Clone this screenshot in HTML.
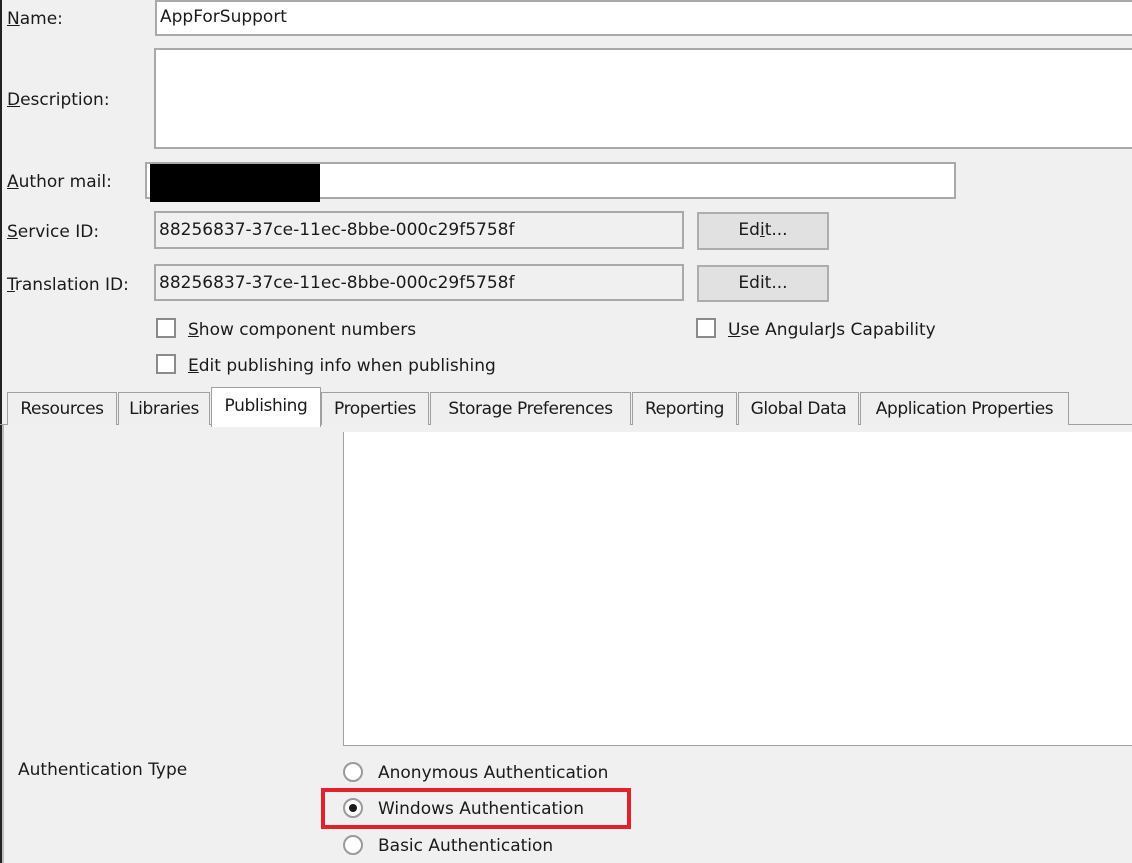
<!DOCTYPE html>
<html><head><style>
body{margin:0;width:1132px;height:863px;background:#f0f0f0;position:relative;overflow:hidden;font-family:"DejaVu Sans","Liberation Sans",sans-serif;font-size:17px;color:#1a1a1a}
.a{position:absolute}
.in{position:absolute;background:#fff;border:2px solid #a9a9a9;box-sizing:border-box}
.ro{background:#f0f0f0}
.lbl{position:absolute;left:7px;white-space:nowrap}
.btn{position:absolute;background:#e1e1e1;border:2px solid #adadad;box-sizing:border-box;text-align:center;line-height:33px}
.cb{position:absolute;width:20px;height:20px;background:#fff;border:2px solid #8a8a8a;box-sizing:border-box}
.tab{position:absolute;top:392px;height:33px;border:1px solid #a0a0a0;border-bottom:none;box-sizing:border-box;background:#efefef;line-height:33px;text-align:center;font-size:17px;letter-spacing:-0.4px}
.rd{position:absolute;left:343px;width:20px;height:20px;border-radius:50%;border:2px solid #9a9a9a;background:#fff;box-sizing:border-box}
u{text-decoration:underline}
</style></head><body>
<div class="a" style="left:0;top:0;width:2px;height:863px;background:#222"></div>
<div class="lbl" style="top:9px"><u>N</u>ame:</div>
<div class="in" style="left:155px;top:0;width:990px;height:36px;padding:5px 3px">AppForSupport</div>
<div class="lbl" style="top:90px"><u>D</u>escription:</div>
<div class="in" style="left:154px;top:48px;width:990px;height:101px"></div>
<div class="lbl" style="top:172px"><u>A</u>uthor mail:</div>
<div class="in" style="left:145px;top:162px;width:811px;height:37px"></div>
<div class="a" style="left:150px;top:164px;width:170px;height:38px;background:#000"></div>
<div class="lbl" style="top:222px"><u>S</u>ervice ID:</div>
<div class="in ro" style="left:154px;top:211px;width:530px;height:38px;padding:7px 3px">88256837-37ce-11ec-8bbe-000c29f5758f</div>
<div class="btn" style="left:697px;top:212px;width:132px;height:38px">Ed<u>i</u>t...</div>
<div class="lbl" style="top:275px"><u>T</u>ranslation ID:</div>
<div class="in ro" style="left:154px;top:264px;width:530px;height:37px;padding:7px 3px">88256837-37ce-11ec-8bbe-000c29f5758f</div>
<div class="btn" style="left:697px;top:265px;width:132px;height:37px">Edit...</div>
<div class="cb" style="left:156px;top:318px"></div>
<div class="a" style="left:188px;top:320px"><u>S</u>how component numbers</div>
<div class="cb" style="left:156px;top:354px"></div>
<div class="a" style="left:188px;top:356px"><u>E</u>dit publishing info when publishing</div>
<div class="cb" style="left:696px;top:318px"></div>
<div class="a" style="left:728px;top:320px"><u>U</u>se AngularJs Capability</div>

<div class="a" style="left:0;top:424px;width:1132px;height:1px;background:#a0a0a0"></div>
<div class="tab" style="left:7px;width:110px">Resources</div>
<div class="tab" style="left:118px;width:92px">Libraries</div>
<div class="tab" style="left:211px;top:387px;height:40px;width:110px;background:#fff;line-height:36px">Publishing</div>
<div class="tab" style="left:321px;width:108px">Properties</div>
<div class="tab" style="left:430px;width:201px">Storage Preferences</div>
<div class="tab" style="left:632px;width:105px">Reporting</div>
<div class="tab" style="left:738px;width:121px">Global Data</div>
<div class="tab" style="left:860px;width:209px">Application Properties</div>
<div class="a" style="left:2px;top:425px;width:2px;height:438px;background:#bdbdbd"></div>
<div class="a" style="left:343px;top:432px;width:800px;height:313px;background:#fff;border-left:1px solid #a0a0a0;border-bottom:1px solid #a0a0a0"></div>
<div class="a" style="left:18px;top:760px">Authentication Type</div>
<div class="rd" style="top:762px"></div>
<div class="a" style="left:378px;top:763px">Anonymous Authentication</div>
<div class="rd" style="top:798px"><div class="a" style="left:4px;top:4px;width:8px;height:8px;border-radius:50%;background:#1a1a1a"></div></div>
<div class="a" style="left:378px;top:799px">Windows Authentication</div>
<div class="rd" style="top:835px"></div>
<div class="a" style="left:378px;top:836px">Basic Authentication</div>
<div class="a" style="left:321px;top:788px;width:310px;height:41px;border:4px solid #e2212b;box-sizing:border-box"></div>
</body></html>
